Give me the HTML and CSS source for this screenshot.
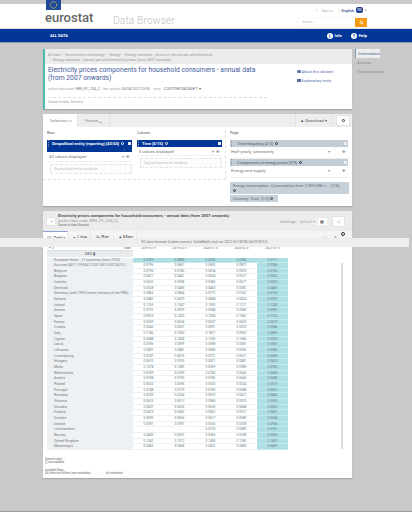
FILE: index.html
```html
<!DOCTYPE html>
<html lang="en">
<head>
<meta charset="utf-8">
<title>Eurostat Data Browser</title>
<link rel="stylesheet" href="styles.css">
</head>
<body>
<div class="page">
  <header class="masthead">
    <div class="brand">
      <svg class="flag" viewBox="0 0 15 10"><rect width="15" height="10" fill="#1f4a9c"/><circle cx="7.5" cy="5" r="3.2" fill="none" stroke="#e8c93a" stroke-width="1" stroke-dasharray="1 .68"/></svg>
      <div class="logo">eurostat</div>
    </div>
    <div class="app-name">Data Browser</div>
    <div class="tools">
      <div class="lang-row">
        <span class="sep">|</span><span class="signin">Sign in</span><span class="sep">|</span><span class="english">English</span>
        <span class="bubble">EN</span><span class="caret">▾</span>
      </div>
      <div class="search"><span class="search-input">Search ...</span><span class="search-btn"><svg viewBox="0 0 8 8" class="ico"><circle cx="3.5" cy="3.5" r="2" fill="none" stroke="#fff" stroke-width="1.2"/><path d="M5 5l2 2" stroke="#fff" stroke-width="1.2"/></svg></span></div>
    </div>
  </header>
  <nav class="bluebar">
    <span class="all-data">ALL DATA</span>
    <span class="nav-right">
      <span class="nav-item"><span class="round">i</span>Info</span>
      <span class="nav-item"><span class="round">?</span>Help</span>
    </span>
  </nav>

  <div class="layout">
    <main class="column">
      <section class="card info-card">
        <div class="crumbs">
          <div>All data &nbsp;› &nbsp;Environment and energy &nbsp;› &nbsp;Energy &nbsp;› &nbsp;Energy statistics - prices of natural gas and electricity</div>
          <div class="crumb2">› &nbsp;Energy statistics - natural gas and electricity prices (from 2007 onwards)</div>
        </div>
        <div class="info-body">
          <div class="info-main">
            <h1>Electricity prices components for household consumers - annual data (from 2007 onwards)</h1>
            <div class="meta"><span>online data code:</span> <b>NRG_PC_204_C</b> &nbsp;&nbsp;<span>last update:</span> <b>04/04/2022 23:00</b> &nbsp;&nbsp;&nbsp;<span>view:</span> &nbsp;&nbsp;<em>CUSTOM DATASET ▾</em></div>
            <div class="source">Source of data: &nbsp;Eurostat</div>
          </div>
          <div class="info-links">
            <div><span class="dot"></span>About this dataset</div>
            <div><span class="square"></span>Explanatory texts</div>
          </div>
        </div>
      </section>

      <section class="card sel-card">
        <div class="sel-tabs">
          <span class="sel-tab active">Selection ▭</span>
          <span class="sel-tab">Format ▁</span>
          <span class="sel-spacer"></span>
          <span class="download">▲ Download ▾</span>
          <span class="gear-btn"><span class="gear"></span></span>
        </div>
        <div class="sel-body">
          <div class="sel-row">
            <div class="dim row-dim">
              <div class="dim-label">Row</div>
              <div class="chip-blue tall">
                <div class="chip-line"><span class="grip"></span><span>Geopolitical entity (reporting) [43/43]</span><span class="gear w"></span><span class="sq"></span></div>
                <div class="chip-arrow">↓</div>
              </div>
              <div class="values"><span>43 values displayed</span><span class="val-icons">▾ &nbsp;✥</span></div>
              <div class="dropzone">Drag and drop here for breakdown</div>
            </div>
            <div class="dim col-dim">
              <div class="dim-label">Column</div>
              <div class="chip-blue"><div class="chip-line"><span class="grip"></span><span>Time [5/15]</span><span class="gear w"></span><span class="sq"></span></div></div>
              <div class="values short"><span>5 values displayed</span><span class="val-icons">▾ &nbsp;✥</span></div>
              <div class="dropzone">Drag and drop here for breakdown</div>
            </div>
            <div class="dim page-dim">
              <div class="dim-label">Page</div>
              <div class="chip-grey"><span class="grip"></span><span>Time frequency [2/2]</span><span class="gear"></span><span class="sq"></span></div>
              <div class="page-val"><span>Half-yearly, semesterly</span><span class="val-icons">▾ &nbsp;&nbsp;&nbsp;&nbsp;&nbsp;&nbsp;&nbsp;&nbsp;&nbsp;&nbsp;✥</span></div>
              <div class="chip-grey"><span class="grip"></span><span>Components of energy prices [9/9]</span><span class="gear"></span><span class="sq"></span></div>
              <div class="page-val"><span>Energy and supply</span><span class="val-icons">▾ &nbsp;&nbsp;&nbsp;&nbsp;&nbsp;&nbsp;&nbsp;&nbsp;&nbsp;&nbsp;✥</span></div>
            </div>
          </div>
          <div class="extra">
            <div class="extra-chip">Energy consumption: &nbsp;Consumption from 2 500 kWh t... &nbsp;&nbsp;[1/6]<br><span class="gear"></span></div>
            <div class="extra-chip small">Currency: &nbsp;Euro &nbsp;[1/3] <span class="gear"></span></div>
          </div>
        </div>
      </section>

      <section class="card table-card">
        <div class="t-head">
          <span class="collapse">⌄</span>
          <div class="t-titles">
            <div class="t-title">Electricity prices components for household consumers - annual data (from 2007 onwards)</div>
            <div class="t-code">[online data code: NRG_PC_204_C]</div>
            <div class="t-src">Source of data: Eurostat</div>
          </div>
          <div class="settings"><span>Settings:</span><span class="default">default ▾</span><span class="set-btn">▦</span></div>
          <span class="share">◁</span>
        </div>
        <div class="t-tabs">
          <span class="t-tab active">▤ Table</span>
          <span class="t-tab">⌁ Line</span>
          <span class="t-tab">⊪ Bar</span>
          <span class="t-tab">♦ Map</span>
          <span class="t-tools"><span class="pale">⟳</span><span>⤢</span><span class="gear big"></span></span>
        </div>
        <div class="t-wrap">
          <div class="t-scroll">
            <div class="t-col-head"><span class="toggles">+ &nbsp;∧</span><span class="time-label">TIME</span><span>2019-S1 ▾</span><span>2019-S2 ▾</span><span>2020-S1 ▾</span><span>2020-S2 ▾</span><span>2021-S1 ▾</span></div>
            <div class="geo-head"><span class="geo">GEO ▮</span></div>
            <div class="grid">
              <div class="tr"><span>European Union - 27 countries (from 2020)</span><span>0.0769</span><span>0.0885</span><span>0.0550</span><span>0.0786</span><span>0.0711</span></div>
              <div class="tr"><span class="narrow">Euro area (EA11-1999,EA12-2001,EA13-2007,EA15-2...</span><span>0.0796</span><span>0.0867</span><span>0.0833</span><span>0.0872</span><span>0.0786</span></div>
              <div class="tr"><span>Belgium</span><span>0.0795</span><span>0.0785</span><span>0.0694</span><span>0.0593</span><span>0.0756</span></div>
              <div class="tr"><span>Bulgaria</span><span>0.0471</span><span>0.0441</span><span>0.0534</span><span>0.0577</span><span>0.0532</span></div>
              <div class="tr"><span>Czechia</span><span>0.0632</span><span>0.0598</span><span>0.0583</span><span>0.0577</span><span>0.0533</span></div>
              <div class="tr"><span>Denmark</span><span>0.0528</span><span>0.0483</span><span>0.0463</span><span>0.0582</span><span>0.0487</span></div>
              <div class="tr"><span>Germany (until 1990 former territory of the FRG)</span><span>0.0865</span><span>0.0864</span><span>0.0772</span><span>0.0741</span><span>0.0755</span></div>
              <div class="tr"><span>Estonia</span><span>0.0482</span><span>0.0479</span><span>0.0468</span><span>0.0424</span><span>0.0992</span></div>
              <div class="tr"><span>Ireland</span><span>0.1255</span><span>0.1347</span><span>0.1500</span><span>0.1221</span><span>0.1243</span></div>
              <div class="tr"><span>Greece</span><span>0.0792</span><span>0.0929</span><span>0.0584</span><span>0.0589</span><span>0.0981</span></div>
              <div class="tr"><span>Spain</span><span>0.0923</span><span>0.1425</span><span>0.1304</span><span>0.1341</span><span>0.1233</span></div>
              <div class="tr"><span>France</span><span>0.0559</span><span>0.0634</span><span>0.0637</span><span>0.0633</span><span>0.0673</span></div>
              <div class="tr"><span>Croatia</span><span>0.0645</span><span>0.0631</span><span>0.0591</span><span>0.0570</span><span>0.0584</span></div>
              <div class="tr"><span>Italy</span><span>0.1186</span><span>0.1060</span><span>0.1811</span><span>0.0963</span><span>0.0883</span></div>
              <div class="tr"><span>Cyprus</span><span>0.5948</span><span>0.1434</span><span>0.1330</span><span>0.1686</span><span>0.0559</span></div>
              <div class="tr"><span>Latvia</span><span>0.0396</span><span>0.0599</span><span>0.0598</span><span>0.0581</span><span>0.0587</span></div>
              <div class="tr"><span>Lithuania</span><span>0.0491</span><span>0.0481</span><span>0.0583</span><span>0.0536</span><span>0.0583</span></div>
              <div class="tr"><span>Luxembourg</span><span>0.0747</span><span>0.0610</span><span>0.0721</span><span>0.0621</span><span>0.0583</span></div>
              <div class="tr"><span>Hungary</span><span>0.0670</span><span>0.0576</span><span>0.0471</span><span>0.0481</span><span>0.0473</span></div>
              <div class="tr"><span>Malta</span><span>0.1378</span><span>0.1389</span><span>0.0969</span><span>0.0989</span><span>0.0953</span></div>
              <div class="tr"><span>Netherlands</span><span>0.0769</span><span>0.0769</span><span>0.0745</span><span>0.0643</span><span>0.0643</span></div>
              <div class="tr"><span>Austria</span><span>0.0758</span><span>0.0750</span><span>0.0785</span><span>0.0646</span><span>0.0580</span></div>
              <div class="tr"><span>Poland</span><span>0.0620</span><span>0.0596</span><span>0.0535</span><span>0.0534</span><span>0.0529</span></div>
              <div class="tr"><span>Portugal</span><span>0.0748</span><span>0.0729</span><span>0.0783</span><span>0.0688</span><span>0.0662</span></div>
              <div class="tr"><span>Romania</span><span>0.0259</span><span>0.0264</span><span>0.0575</span><span>0.0417</span><span>0.0486</span></div>
              <div class="tr"><span>Slovenia</span><span>0.0623</span><span>0.0612</span><span>0.0585</span><span>0.0573</span><span>0.0550</span></div>
              <div class="tr"><span>Slovakia</span><span>0.0607</span><span>0.0633</span><span>0.0635</span><span>0.0688</span><span>0.0662</span></div>
              <div class="tr"><span>Finland</span><span>0.0473</span><span>0.0582</span><span>0.0562</span><span>0.0527</span><span>0.0491</span></div>
              <div class="tr"><span>Sweden</span><span>0.0690</span><span>0.0565</span><span>0.0617</span><span>0.0580</span><span>0.0568</span></div>
              <div class="tr"><span>Iceland</span><span>0.0397</span><span>0.0391</span><span>0.0333</span><span>0.0378</span><span>0.0906</span></div>
              <div class="tr"><span>Liechtenstein</span><span>:</span><span>:</span><span>0.0723</span><span>0.0089</span><span>0.0761</span></div>
              <div class="tr"><span>Norway</span><span>0.0405</span><span>0.0507</span><span>0.0365</span><span>0.0598</span><span>0.0535</span></div>
              <div class="tr"><span>United Kingdom</span><span>0.1342</span><span>0.1312</span><span>0.1493</span><span>0.1285</span><span>0.1851</span></div>
              <div class="tr"><span>Montenegro</span><span>0.0466</span><span>0.0468</span><span>0.0432</span><span>0.0403</span><span>0.0459</span></div>
            </div>
          </div>
          <div class="scrollbar"></div>
        </div>
        <div class="notes">
          <div>Special value:</div>
          <div>[:] not available</div>
          <div class="flags-title">available flags:</div>
          <div class="flags"><span>(d) definition differs (see metadata)</span><span>(e) estimated</span></div>
        </div>
      </section>
    </main>
    <aside class="side">
      <div class="side-item active">Information</div>
      <div class="side-item">Actions</div>
      <div class="side-item">Visualisations</div>
    </aside>
  </div>
  <div class="build">EC data browser (Latest commit: 5a0a86bf6, built on 2022-03-18T06:04:09.001Z)</div>
</div>
</body>
</html>
```
FILE: styles.css
```css
* { box-sizing: border-box; }
html, body { margin: 0; height: 100%; overflow: hidden; }
body { background: #c9c9c9; font-family: Roboto, "Liberation Sans", sans-serif; color: #666; }
.page { position: relative; height: 512px; overflow: hidden; border-bottom: 1px solid #9a9a9a; }

.masthead { position: relative; height: 25px; margin-top: 4px; background: #fff; display: flex; padding-left: 45px; border-bottom: 1px solid #e2e2e2; }
.brand { width: 68px; }
.flag { display: block; width: 15px; height: 10px; margin: -4px 0 0 1px; }
.logo { font-size: 13px; line-height: 12px; margin-top: 2px; font-weight: 500; color: #666; }
.app-name { font-size: 10.2px; font-weight: 300; color: #bdbdbd; margin-top: 11px; letter-spacing: .15px; line-height: 12px; }
.tools { margin-left: auto; padding-right: 45px; width: 115px; display: flex; flex-direction: column; align-items: flex-end; }
.lang-row { display: flex; align-items: center; font-size: 3.8px; height: 12px; gap: 2px; white-space: nowrap; }
.sep { color: #999; margin-left: 4px; }
.signin { color: #aaa; margin-left: 2px; }
.english { color: #5b6f9f; font-weight: 700; }
.bubble { background: #1f3f92; color: #fff; width: 7px; height: 6px; border-radius: 2px; text-align: center; line-height: 6px; font-size: 3px; }
.caret { font-size: 3px; }
.search { display: flex; width: 69px; height: 9px; margin-top: 2px; }
.search-input { flex: 1; font-size: 3.6px; line-height: 9px; color: #bbb; padding-left: 4px; box-shadow: 0 0 1px #ccc; }
.search-btn { width: 12px; background: #f59a13; display: flex; align-items: center; justify-content: center; }
.ico { width: 5px; height: 5px; }

.bluebar { height: 14px; background: #033797; color: #fff; display: flex; align-items: center; padding: 0 45px 0 50px; border-bottom: 1px solid #8f9bb5; font-size: 4px; font-weight: 700; }
.nav-right { margin-left: auto; display: flex; gap: 9px; }
.nav-item { display: flex; align-items: center; gap: 2px; }
.round { width: 6px; height: 6px; border-radius: 50%; background: #fff; color: #033797; text-align: center; line-height: 6px; font-size: 5px; }

.layout { display: flex; gap: 3px; padding: 6px 0 0 43px; }
.column { width: 309px; }
.card { background: #fff; box-shadow: 0 1px 1px #a9a9a9; }

.side { width: 28px; font-size: 4.2px; color: #8a8a8a; }
.side-item { height: 9px; line-height: 9px; padding-left: 2px; }
.side-item.active { background: #eee; color: #4a5f99; border-left: 1px solid #7c8fb9; width: 25px; }

.info-card { height: 60px; border-left: 2px solid #4dbdb2; }
.crumbs { height: 15px; background: #ececec; font-size: 3.7px; color: #999; padding: 3.5px 0 0 3px; line-height: 5px; white-space: nowrap; }
.crumb2 { padding-left: 2px; }
.info-body { display: flex; padding-left: 3px; }
.info-main { width: 249px; }
h1 { margin: 3px 0 0; font-size: 6.75px; line-height: 7.5px; font-weight: 400; color: #3f5a9c; width: 222px; }
.meta { font-size: 3.5px; margin-top: 4px; color: #aaa; white-space: nowrap; line-height: 5px; }
.meta b { font-weight: 400; color: #777; }
.meta em { font-style: normal; color: #666; font-size: 4px; }
.source { font-size: 3.2px; color: #999; border-top: 1px dashed #ddd; margin-top: 5px; padding-top: 2px; line-height: 4px; width: 219px; }
.info-links { font-size: 3.9px; color: #5570a8; margin-top: 3px; line-height: 9px; white-space: nowrap; }
.dot, .square { display: inline-block; width: 3.5px; height: 3.5px; background: #5570a8; margin-right: 1px; }
.dot { border-radius: 50%; }

.sel-card { height: 92px; margin-top: 5px; }
.sel-tabs { height: 13px; background: #eee; display: flex; font-size: 4.2px; color: #888; line-height: 13px; }
.sel-tab { padding: 0 7px; width: 32px; white-space: nowrap; border-right: 1px solid #e3e3e3; }
.sel-tab.active { background: #fff; width: 35px; }
.sel-spacer { flex: 1; }
.download { width: 38px; border-left: 1px solid #e3e3e3; border-right: 1px solid #e3e3e3; padding-left: 4px; color: #555; white-space: nowrap; }
.gear-btn { width: 12px; height: 9px; margin: 2px 3px 0 4px; background: #fff; display: flex; align-items: center; justify-content: center; box-shadow: 0 0 1px #aaa; }
.gear { display: inline-block; width: 3px; height: 3px; border: 1px solid #333; border-radius: 50%; vertical-align: middle; flex: none; }
.gear.w { border-color: #fff; margin-left: 2px; }
.gear.big { width: 4px; height: 4px; }
.grip { flex: none; width: 1px; height: 100%; border-left: 1px dotted #8a97ad; margin: 0 3px 0 1px; }
.sq { flex: none; width: 3px; height: 3px; margin: 0 1px 0 auto; background: #e9edf2; }

.sel-body { position: relative; height: 79px; }
.sel-row { display: flex; height: 53px; padding-left: 4px; border-bottom: 1px dashed #e2e2e2; width: 183px; }
.dim { flex: none; }
.row-dim { width: 85px; margin-right: 5px; }
.col-dim { width: 85px; }
.page-dim { width: 124px; padding-right: 1px; border-left: 1px dashed #e2e2e2; padding-left: 4px; margin: 3px 0 0 3px; height: 49px; }
.dim-label { font-size: 3.8px; height: 13px; line-height: 6px; padding-top: 3px; color: #555; }
.page-dim .dim-label { height: 10px; padding-top: 0; }
.chip-blue { background: #033797; color: #fff; font-size: 4px; font-weight: 700; height: 7px; line-height: 7px; white-space: nowrap; }
.chip-line { display: flex; align-items: center; height: 7px; }
.chip-arrow { text-align: right; padding-right: 7px; font-size: 4px; line-height: 5px; }
.chip-blue.tall { height: 12px; }
.values { display: flex; justify-content: space-between; height: 10px; font-size: 4.3px; line-height: 10px; color: #777; padding: 0 2px; border-bottom: 1px solid #f0f0f0; }
.values.short { height: 9px; line-height: 9px; }
.val-icons { color: #888; padding-right: 1px; }
.dropzone { margin: 2px 0 0 3px; height: 10px; border: 1px dashed #e4e4e4; background: #fcfcfc; font-size: 2.9px; line-height: 9px; color: #bbb; padding-left: 3px; }
.chip-grey { display: flex; align-items: center; gap: 2px; background: #c1ccd6; height: 7px; line-height: 7px; font-size: 3.9px; color: #555; white-space: nowrap; }
.page-val { display: flex; justify-content: space-between; height: 12px; line-height: 10px; font-size: 4.3px; color: #777; padding: 0 2px 0 1px; border-bottom: 1px solid #f0f0f0; }
.extra { position: absolute; left: 187px; top: 55px; width: 119px; font-size: 3.9px; color: #666; }
.extra-chip { background: #c6d1da; padding: 1px 0 0 3px; height: 12px; line-height: 5px; white-space: nowrap; margin-bottom: 1px; }
.extra-chip.small { width: 48px; height: 7px; }

.table-card { height: 267px; margin-top: 5px; }
.t-head { height: 20px; background: #ececec; display: flex; align-items: flex-start; padding: 0 5px 0 4px; }
.collapse { width: 8px; height: 7px; background: #fff; margin-top: 7px; font-size: 4px; line-height: 6px; text-align: center; color: #333; box-shadow: 0 0 1px #aaa; }
.t-titles { margin-left: 3px; width: 222px; padding-top: 2px; white-space: nowrap; }
.t-title { font-size: 4.2px; font-weight: 700; line-height: 5px; color: #555; }
.t-code { font-size: 3.9px; line-height: 5px; color: #999; }
.t-src { font-size: 2.9px; line-height: 4px; color: #666; }
.settings { display: flex; align-items: center; font-size: 4.4px; color: #999; gap: 3px; margin-top: 6px; height: 9px; white-space: nowrap; }
.default { font-size: 3.8px; color: #aaa; }
.set-btn { width: 9px; height: 7px; background: #fff; font-size: 4px; line-height: 7px; text-align: center; color: #333; }
.share { width: 11px; height: 9px; margin: 6px 0 0 6px; background: #fff; font-size: 4px; line-height: 9px; text-align: center; box-shadow: 0 0 1px #aaa; flex: none; }
.t-tabs { height: 16px; display: flex; background: #f4f4f4; font-size: 5.2px; line-height: 12px; color: #555; }
.t-tab { width: 23px; padding: 0 0 0 5px; border-right: 1px solid #e8e8e8; white-space: nowrap; overflow: hidden; }
.t-tab.active { width: 25px; padding-left: 4px; background: #fff; border-top: 1px solid #8f9fd0; }
.t-tools { margin-left: auto; display: flex; gap: 5px; padding-right: 7px; color: #333; align-items: flex-start; padding-top: 1px; }
.pale { color: #ccc; }
.t-wrap { display: flex; height: 207px; padding-left: 4px; position: relative; }
.t-scroll { width: 241px; height: 207px; overflow: hidden; }
.t-col-head { display: grid; grid-template-columns: 74px 12px repeat(5, 31px); font-size: 3.2px; height: 3px; line-height: 3px; color: #555; text-align: center; }
.toggles { text-align: left; padding-left: 2px; }
.geo-head { width: 86px; height: 7px; background: #e7ebee; font-size: 3.6px; line-height: 7px; text-align: center; border-top: 1px solid #ddd; color: #555; }
.grid { display: grid; grid-template-columns: 86px repeat(5, 31px); grid-auto-rows: 5.67px; font-size: 3.2px; margin-top: .5px; }
.tr { display: contents; }
.tr span { line-height: 5px; text-align: center; color: #6d7b80; border-bottom: 1px solid #eef1f2; white-space: nowrap; overflow: hidden; }
.tr span:first-child { background: #edf1f4; text-align: left; padding-left: 7px; color: #777; border-color: #edf1f4; font-size: 3.5px; }
.tr span.narrow { font-size: 3.1px; }
.tr span:last-child { background: #addfe5; border-color: #c4e8ec; }
.tr:first-child span:not(:first-child) { background: #addfe5; border-color: #c4e8ec; }
.scrollbar { position: absolute; left: 298px; top: 16px; bottom: 5px; width: 2px; background: #ddd; }
.notes { font-size: 2.9px; line-height: 3.6px; padding: 3.5px 0 0 2px; color: #666; }
.flags-title { margin-top: 4px; }
.flags { display: flex; gap: 15px; }

.build { position: absolute; left: 0; top: 238px; width: 409px; height: 9px; background: #eee; font-size: 3.5px; line-height: 8px; text-align: center; color: #777; }
```
